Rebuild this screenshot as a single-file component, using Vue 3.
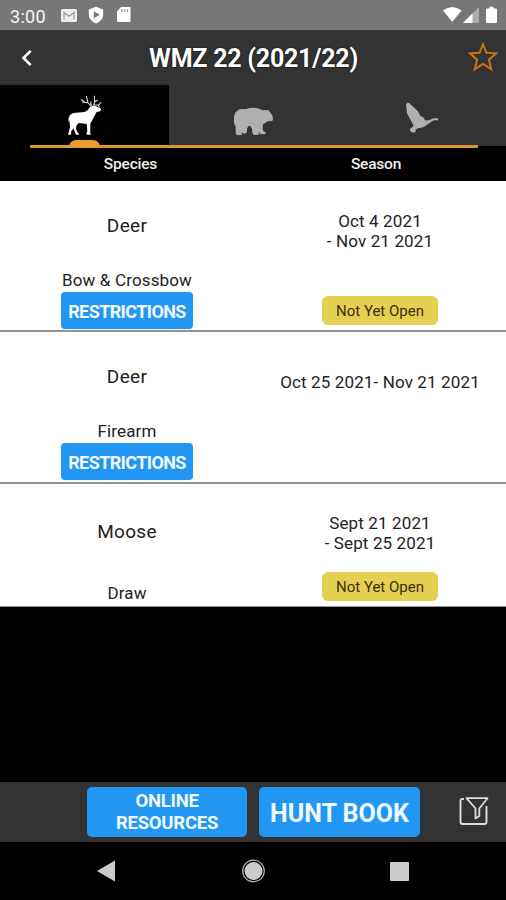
<script setup>
const seasons = [
  { species: 'Deer', method: 'Bow & Crossbow', dates: ['Oct 4 2021', '- Nov 21 2021'], restricted: true, status: 'Not Yet Open', kind: 'bow' },
  { species: 'Deer', method: 'Firearm', dates: ['Oct 25 2021- Nov 21 2021'], restricted: true, status: '', kind: 'firearm' },
  { species: 'Moose', method: 'Draw', dates: ['Sept 21 2021', '- Sept 25 2021'], restricted: false, status: 'Not Yet Open', kind: 'draw' }
]
</script>

<template>
  <div class="screen">
    <div class="status">
      <span class="clock">3:00</span>
      <svg class="status-left" viewBox="0 0 74 18" width="74" height="18">
        <rect x="1" y="3" width="16" height="13" rx="1.5" fill="#eee" />
        <path d="M4 13.500V6.500l5 3.800 5-3.800v7" fill="none" stroke="#999" stroke-width="1.200" />
        <path d="M36 .8l7.200 2.700v5c0 4-3 7.300-7.200 9-4.200-1.700-7.200-5-7.200-9v-5z" fill="#fff" />
        <path d="M33.800 5.300l6 3.500-6 3.500z" fill="#777" />
        <path d="M61 1h8.500q1 0 1 1v13q0 1-1 1h-11q-1.500 0-1.500-1V5.500z" fill="#fff" />
        <path d="M62 3v3M64.800 3v3M67.600 3v3" stroke="#999" stroke-width="1.200" />
      </svg>
      <svg class="status-right" viewBox="0 0 56 18" width="56" height="18">
        <path d="M0 4.500Q9.300-2.500 18.600 4.500L9.300 16z" fill="#fff" />
        <path d="M36 1v16H20z" fill="#aaa" />
        <path d="M29.500 7.500V17H20z" fill="#fff" />
        <path d="M46.500 2.500V.8h4v1.700H53q1 0 1 1V16q0 1-1 1h-9q-1 0-1-1V3.500q0-1 1-1z" fill="#fff" />
      </svg>
    </div>

    <header class="header">
      <svg class="back" viewBox="0 0 12 18" width="12" height="18">
        <path d="M9.700 1.800L2.500 9l7.200 7.200" fill="none" stroke="#fff" stroke-width="2.600" />
      </svg>
      <h1 class="title">WMZ 22 (2021/22)</h1>
      <svg class="star" viewBox="0 0 30 30" width="30" height="30">
        <path d="M15 2.300l3.500 8.500 9.600.5-7.200 6.400 2.400 9.600L15 22l-8.300 5.300 2.400-9.600-7.200-6.400 9.600-.5z" fill="none" stroke="#c87516" stroke-width="2" />
      </svg>
    </header>

    <nav class="tabs">
      <div class="tab active">
        <svg class="elk" viewBox="200 40 111 132" width="37" height="44">
          <path d="M209 107Q214 99 226 99L253 97Q264 93 269 82L278 78 286 79 302 87 300 95 289 97Q282 109 275 123L270 131 270 153 269 159 273 164 262 166 258 163 261 154 259 133 235 130 228 138 227 148 231 157 237 165 227 165 222 153 221 146 213 154 212 165 203 165 207 151 209 142 207 121 204 129 205 114z" fill="#fff" />
          <path d="M273 81L263 69 245 67M263 69L258 49M253 67L242 59M273 81L271 65M280 79L283 64 282 48M283 66L292 61M281 76L295 76 303 68M293 76L298 83" fill="none" stroke="#ddd" stroke-width="3.200" />
        </svg>
      </div>
      <div class="tab">
        <svg class="bear" viewBox="189 80 123 90" width="41" height="30">
          <path d="M203 90Q211 84 226 87Q247 80 263 84L278 90 286 89 290 90Q296 88 298 93L306 103 309 115 307 122 294 123Q286 128 279 132L278 146 280 153 287 156 285 162 270 161 267 153 266 158 267 163 252 164 247 159 246 145 241 137 235 137 231 145 231 155 226 160 214 157 216 164 203 165 197 161 197 139 192 128 192 109Q194 96 203 90z" fill="#b0b0b0" />
        </svg>
      </div>
      <div class="tab">
        <svg class="goose" viewBox="207 62 105 96" width="35" height="32">
          <path d="M210 73Q213 65 219 68L239 86Q251 96 253 107L261 110 267 120Q281 121 289 115 300 111 308 116L306 120 293 120Q284 126 275 132 263 144 247 143L238 148 240 154 230 157Q221 154 222 146L233 137 225 121 213 99z" fill="#b0b0b0" />
        </svg>
      </div>
      <div class="indicator"></div>
      <div class="knob"></div>
    </nav>

    <div class="columns">
      <span>Species</span>
      <span>Season</span>
    </div>

    <main class="list">
      <section v-for="s in seasons" :key="s.kind" class="row" :class="s.kind">
        <div class="cell">
          <div class="species">{{ s.species }}</div>
          <div class="method">{{ s.method }}</div>
          <button v-if="s.restricted" class="restrictions">RESTRICTIONS</button>
        </div>
        <div class="cell">
          <div class="dates">
            <div v-for="d in s.dates" :key="d">{{ d }}</div>
          </div>
          <div v-if="s.status" class="badge">{{ s.status }}</div>
        </div>
      </section>
    </main>

    <footer class="footer">
      <button class="big online">ONLINE<br />RESOURCES</button>
      <button class="big hunt">HUNT BOOK</button>
      <svg class="filter" viewBox="0 0 32 32" width="32" height="32">
        <path d="M6 3H4.500Q2.500 3 2.500 5V26q0 2 2 2H26.500q2 0 2-2V10" fill="none" stroke="#ddd" stroke-width="1.900" />
        <path d="M8.500 2.200H29.500L21.300 12.500V20l-3.800 2.400V12.500z" fill="#333" stroke="#ddd" stroke-width="1.800" stroke-linejoin="round" />
      </svg>
    </footer>

    <div class="system">
      <svg viewBox="0 0 506 58" width="506" height="58">
        <path d="M97 29L115 18.500V39.500z" fill="#ccc" />
        <circle cx="253.500" cy="29" r="10.800" fill="none" stroke="#aaa" stroke-width="1.300" />
        <circle cx="253.500" cy="29" r="9" fill="#ccc" />
        <rect x="390" y="20" width="19" height="19" rx="1" fill="#ccc" />
      </svg>
    </div>
  </div>
</template>

<style>
body {
  background: #000;
}
</style>

<style scoped>
.screen {
  width: 506px;
  height: 900px;
  display: flex;
  flex-direction: column;
  overflow: hidden;
  background: #000;
  color: #222;
  font-family: Roboto, "Liberation Sans", sans-serif;
}
.status {
  height: 30px;
  flex: none;
  display: flex;
  align-items: center;
  padding: 0 7px 0 10px;
  box-sizing: border-box;
  background: #777;
}
.clock {
  width: 37px;
  padding-top: 2px;
  color: #f4f4f4;
  font-size: 18px;
  letter-spacing: 0.3px;
  white-space: nowrap;
}
.status-left {
  margin-left: 13px;
}
.status-right {
  margin-left: auto;
}
.header {
  height: 55px;
  flex: none;
  display: flex;
  align-items: center;
  justify-content: space-between;
  padding: 0 8px 0 21px;
  background: #333;
}
.title {
  margin: 0 0 0 6px;
  padding-top: 1px;
  color: #fff;
  font-size: 25px;
  font-weight: 700;
  letter-spacing: -0.25px;
  white-space: nowrap;
  text-shadow: 0 0 2px #000;
}
.star {
  margin-bottom: 1px;
}
.tabs {
  position: relative;
  height: 61px;
  flex: none;
  display: grid;
  grid-template-columns: 169px 168px 169px;
  background: #333;
}
.tab.active {
  background: #000;
}
.tab svg {
  display: block;
}
.elk {
  margin: 8px 0 0 67px;
}
.bear {
  margin: 22px 0 0 64px;
}
.goose {
  margin: 16px 0 0 68px;
}
.indicator {
  position: absolute;
  left: 30px;
  top: 60px;
  width: 448px;
  height: 3px;
  background: #df9434;
  border-radius: 1px;
}
.knob {
  position: absolute;
  left: 69px;
  top: 55px;
  width: 31px;
  height: 7px;
  background: #ef9a30;
  border-radius: 7px 7px 0 0;
}
.columns {
  height: 35px;
  flex: none;
  display: grid;
  grid-template-columns: 261px 230px;
  align-items: center;
  text-align: center;
  color: #eee;
  font-size: 15.500px;
  font-weight: 500;
  letter-spacing: -0.2px;
}
.row {
  display: grid;
  grid-template-columns: 254px 252px;
  box-sizing: border-box;
  background: #fff;
  border-bottom: 2px solid #949494;
}
.bow {
  height: 151px;
}
.firearm {
  height: 152px;
}
.draw {
  height: 123px;
  border-bottom: 1px solid #949494;
}
.cell {
  display: flex;
  flex-direction: column;
  align-items: center;
}
.species {
  margin-top: 33px;
  height: 24px;
  line-height: 24px;
  font-size: 19px;
  letter-spacing: 0.3px;
}
.method {
  margin-top: 32px;
  height: 20px;
  line-height: 20px;
  font-size: 17px;
  letter-spacing: 0.15px;
}
.restrictions {
  margin-top: 2px;
  width: 132px;
  height: 37px;
  padding: 1px 0 0;
  border: 0;
  border-radius: 4px;
  background: #2196f3;
  color: #f2f8ff;
  font: 700 18px Roboto, sans-serif;
  letter-spacing: -0.6px;
}
.dates {
  margin-top: 30px;
  font-size: 17px;
  line-height: 20px;
  letter-spacing: 0.13px;
  text-align: center;
  white-space: nowrap;
}
.badge {
  margin-top: 45px;
  width: 116px;
  height: 29px;
  line-height: 30px;
  border-radius: 6px;
  background: #e5cf50;
  color: #3a3010;
  text-align: center;
  font-size: 15px;
}
.firearm .dates {
  margin-top: 40px;
}
.draw .species {
  margin-top: 36px;
}
.draw .method {
  margin-top: 39px;
}
.draw .dates {
  margin-top: 29px;
}
.draw .badge {
  margin-top: 19px;
}
.footer {
  height: 60px;
  flex: none;
  margin-top: auto;
  display: flex;
  align-items: center;
  padding-left: 87px;
  box-sizing: border-box;
  background: #333;
}
.big {
  height: 50px;
  padding: 1px 0 0;
  border: 0;
  border-radius: 5px;
  background: #2196f3;
  color: #f2f8ff;
  font-family: Roboto, sans-serif;
  font-weight: 700;
}
.online {
  width: 160px;
  font-size: 18.500px;
  line-height: 21.500px;
  letter-spacing: -0.25px;
}
.hunt {
  width: 161px;
  margin-left: 12px;
  padding-top: 2px;
  font-size: 25px;
}
.filter {
  margin-left: 38px;
}
.system {
  height: 58px;
  flex: none;
}
.system svg {
  display: block;
}
</style>
